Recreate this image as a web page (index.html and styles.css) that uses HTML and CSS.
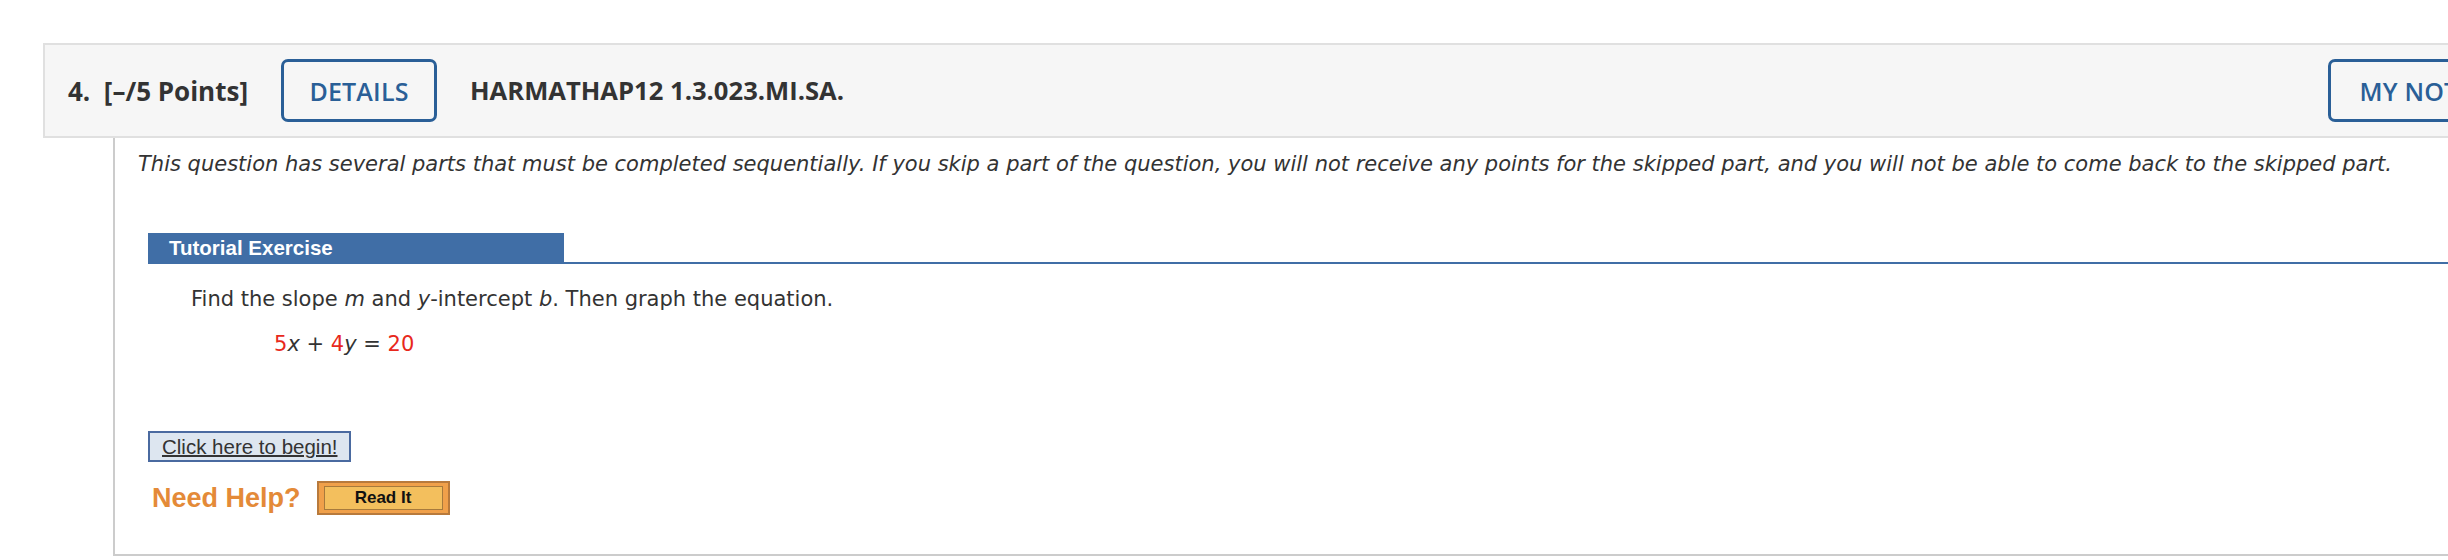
FILE: index.html
```html
<!DOCTYPE html>
<html>
<head>
<meta charset="utf-8">
<link rel="stylesheet" href="styles.css">
</head>
<body>
<div class="question">
  <div class="q-header">
    <span class="q-num">4.&nbsp; [–/5 Points]</span>
    <button class="btn-outline">DETAILS</button>
    <span class="q-code">HARMATHAP12 1.3.023.MI.SA.</span>
    <button class="btn-outline btn-notes">MY NOTES</button>
  </div>
  <div class="q-body">
    <p class="intro">This question has several parts that must be completed sequentially. If you skip a part of the question, you will not receive any points for the skipped part, and you will not be able to come back to the skipped part.</p>
    <div class="tutorial">
      <div class="tut-head"><span class="tut-title">Tutorial Exercise</span></div>
      <p class="prompt">Find the slope <i>m</i> and <i>y</i>-intercept <i>b</i>. Then graph the equation.</p>
      <p class="equation"><span class="red">5</span><i>x</i> + <span class="red">4</span><i>y</i> = <span class="red">20</span></p>
      <div class="begin"><a class="begin-link" href="#">Click here to begin!</a></div>
      <div class="help">
        <span class="need">Need Help?</span>
        <span class="read-it"><span class="read-inner">Read It</span></span>
      </div>
    </div>
  </div>
</div>
</body>
</html>
```
FILE: styles.css
```css
html, body {
  margin: 0;
  padding: 0;
  background: #ffffff;
  overflow: hidden;
}
body {
  width: 2448px;
  height: 560px;
}
.question {
  padding: 43px 0 0 43px;
  width: 2700px;
}
.q-header {
  display: flex;
  align-items: center;
  height: 91px;
  background: #f6f6f6;
  border: 2px solid #e0e0e0;
  border-right: none;
  padding-left: 23px;
  font-family: "Open Sans", "Liberation Sans", sans-serif;
  color: #333333;
}
.q-num {
  font-size: 26px;
  font-weight: 700;
  white-space: pre;
}
.btn-outline {
  font-family: "Open Sans", "Liberation Sans", sans-serif;
  font-size: 25px;
  font-weight: 600;
  color: #2a5f97;
  background: transparent;
  border: 3px solid #2a5f97;
  border-radius: 7px;
  height: 63px;
  width: 156px;
  padding: 0;
  margin-left: 33px;
  letter-spacing: 0.2px;
}
.q-code {
  margin-left: 33px;
  font-size: 25.6px;
  font-weight: 700;
}
.btn-notes {
  margin-left: 1484px;
  width: 190px;
}
.q-body {
  margin-left: 70px;
  border-left: 2px solid #cccccc;
  border-bottom: 2px solid #cccccc;
  height: 418px;
  box-sizing: border-box;
  font-family: "DejaVu Sans", Verdana, sans-serif;
  color: #333333;
}
.intro {
  margin: 0;
  padding: 11px 0 0 23px;
  font-size: 21px;
  line-height: 30px;
  font-style: italic;
  white-space: nowrap;
}
.tutorial {
  margin: 54px 0 0 33px;
}
.tut-head {
  border-bottom: 2px solid #406ea6;
}
.tut-title {
  display: block;
  width: 395px;
  height: 29px;
  padding-left: 21px;
  background: #406ea6;
  color: #ffffff;
  font-family: "Liberation Sans", Arial, sans-serif;
  font-weight: 700;
  font-size: 20.5px;
  line-height: 29px;
}
.prompt {
  margin: 20px 0 0 43px;
  font-size: 21px;
  line-height: 30px;
}
.equation {
  margin: 15px 0 0 126px;
  font-size: 21px;
  line-height: 30px;
}
.red {
  color: #e8281c;
}
.begin {
  margin-top: 72px;
}
.begin-link {
  display: inline-block;
  background: #dde6f0;
  border: 2px solid #4a6aa0;
  padding: 0 12px;
  height: 27px;
  line-height: 27px;
  font-family: "Liberation Sans", Arial, sans-serif;
  font-size: 20.5px;
  color: #333333;
  text-decoration: underline;
  text-decoration-thickness: 2px;
}
.help {
  display: flex;
  align-items: center;
  margin-top: 19px;
  margin-left: 4px;
}
.need {
  font-family: "Liberation Sans", Arial, sans-serif;
  font-weight: 700;
  font-size: 27px;
  color: #e48a38;
}
.read-it {
  display: inline-block;
  margin-left: 16px;
  background: #f0a04a;
  border: 2px solid #b87a3c;
  padding: 3px 5px;
}
.read-inner {
  display: block;
  width: 117px;
  height: 22px;
  background: #f3bf5d;
  border: 1px solid #a77a3c;
  text-align: center;
  font-family: "Liberation Sans", Arial, sans-serif;
  font-weight: 700;
  font-size: 17px;
  line-height: 22px;
  color: #111111;
}
```
